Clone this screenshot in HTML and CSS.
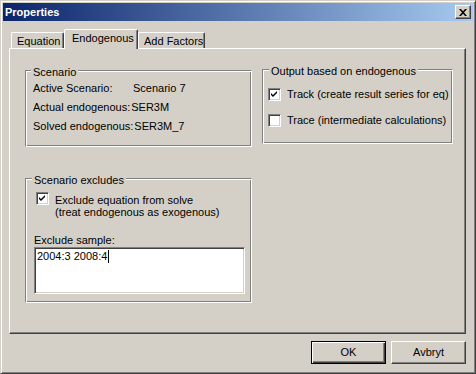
FILE: index.html
```html
<!DOCTYPE html>
<html lang="en">
<head>
  <meta charset="UTF-8" />
  <title>Properties</title>
  <link rel="stylesheet" href="styles.css">
</head>
<body>

  <div class="window">
    <div class="titlebar">
      <span class="title">Properties</span>
      <div class="close-btn">
        <svg width="8" height="7" viewBox="0 0 8 7">
          <path d="M0 0h2l2 2.2L6 0h2L5 3.5 8 7H6L4 4.8 2 7H0l3-3.5z" fill="#000"/>
        </svg>
      </div>
    </div>

    <div class="tabs">
      <div class="tab tab-eq">Equation</div>
      <div class="tab tab-endo active">Endogenous</div>
      <div class="tab tab-af">Add Factors</div>
    </div>

    <div class="panel">
      <div class="col-left">
        <div class="group scenario">
          <div class="group-title">Scenario</div>
          <div class="kv-row"><span class="kv-key">Active Scenario:</span><span class="kv-val first">Scenario 7</span></div>
          <div class="kv-row"><span class="kv-key">Actual endogenous:</span><span class="kv-val">SER3M</span></div>
          <div class="kv-row"><span class="kv-key">Solved endogenous:</span><span class="kv-val">SER3M_7</span></div>
        </div>

        <div class="group excludes">
          <div class="group-title">Scenario excludes</div>
          <div class="check-row multi">
            <div class="checkbox checked">
              <svg width="13" height="13" viewBox="0 0 13 13"><polygon points="3,5 5,7 9,3 9,5 5,9 3,7" fill="#000"/></svg>
            </div>
            <div class="check-label">
              <div>Exclude equation from solve</div>
              <div>(treat endogenous as exogenous)</div>
            </div>
          </div>
          <div class="field-label">Exclude sample:</div>
          <div class="textbox">2004:3 2008:4<span class="caret"></span></div>
        </div>
      </div>

      <div class="col-right">
        <div class="group output">
          <div class="group-title">Output based on endogenous</div>
          <div class="check-row">
            <div class="checkbox checked">
              <svg width="13" height="13" viewBox="0 0 13 13"><polygon points="3,5 5,7 9,3 9,5 5,9 3,7" fill="#000"/></svg>
            </div>
            <span class="check-label">Track (create result series for eq)</span>
          </div>
          <div class="check-row second">
            <div class="checkbox"></div>
            <span class="check-label">Trace (intermediate calculations)</span>
          </div>
        </div>
      </div>
    </div>

    <div class="footer">
      <div class="btn default">OK</div>
      <div class="btn">Avbryt</div>
    </div>
  </div>

</body>
</html>
```

FILE: styles.css
```css
* {
  box-sizing: border-box;
}

body {
  margin: 0;
  padding: 0;
  background: #d4d0c8;
  font-family: "Liberation Sans", Arial, sans-serif;
  font-size: 11px;
  line-height: 13px;
  color: #000;
}

.window {
  width: 476px;
  height: 374px;
  background: #d4d0c8;
  border: 1px solid;
  border-color: #d4d0c8 #404040 #404040 #d4d0c8;
  box-shadow: inset 1px 1px #fff, inset -1px -1px #808080;
  padding: 2px;
  display: flex;
  flex-direction: column;
}

/* title bar */
.titlebar {
  height: 18px;
  display: flex;
  align-items: center;
  justify-content: space-between;
  padding: 0 2px 0 2px;
  background: linear-gradient(to right, #0a246a, #a6caf0);
}

.title {
  color: #fff;
  font-weight: bold;
}

.close-btn {
  width: 16px;
  height: 14px;
  background: #d4d0c8;
  border: 1px solid;
  border-color: #fff #404040 #404040 #fff;
  box-shadow: inset -1px -1px #808080;
  display: flex;
  align-items: center;
  justify-content: center;
  padding-right: 1px;
}

/* tabs */
.tabs {
  display: flex;
  align-items: flex-end;
  margin-top: 8px;
  padding-left: 8px;
}

.tab {
  height: 16px;
  border: 1px solid;
  border-bottom: none;
  border-color: #fff #404040 #404040 #fff;
  border-radius: 2px 2px 0 0;
  box-shadow: inset -1px 0 #808080;
  padding: 2px 0 0 5px;
}

.tab-eq { width: 53px; }
.tab-endo { width: 74px; }
.tab-af { width: 67px; }

.tab.active {
  position: relative;
  z-index: 1;
  height: 20px;
  margin-bottom: -1px;
  background: #d4d0c8;
  padding: 2px 0 0 7px;
}

/* panel */
.panel {
  margin-left: 6px;
  width: 457px;
  height: 286px;
  border: 1px solid;
  border-color: #fff #404040 #404040 #fff;
  box-shadow: inset -1px -1px #808080;
  padding: 21px 0 0 15px;
  display: flex;
  gap: 10px;
  align-items: flex-start;
}

.col-left {
  width: 227px;
  display: flex;
  flex-direction: column;
  gap: 31px;
}

.col-right {
  width: 191px;
  margin-top: -1px;
}

.group {
  border: 1px solid;
  border-color: #808080 #fff #fff #808080;
  box-shadow: inset 1px 1px #fff, inset -1px -1px #808080;
}

.group-title {
  display: table;
  margin: -5px 0 0 5px;
  padding: 0 2px;
  background: #d4d0c8;
}

.scenario {
  height: 77px;
  padding-left: 7px;
}

.scenario .group-title {
  margin-left: -2px;
  margin-bottom: 3px;
}

.kv-row {
  display: flex;
  white-space: nowrap;
  margin-bottom: 6px;
}

.kv-key {
  flex: none;
  min-width: 97px;
  margin-right: 1px;
}

.kv-val.first {
  padding-left: 2px;
}

.output {
  height: 75px;
  padding-left: 5px;
}

.output .group-title {
  margin-left: 1px;
  margin-bottom: 10px;
}

.check-row {
  display: flex;
  align-items: center;
  gap: 6px;
  white-space: nowrap;
}

.check-row.second {
  margin-top: 13px;
}

.checkbox {
  width: 13px;
  height: 13px;
  flex: none;
  background: #fff;
  border: 1px solid;
  border-color: #808080 #fff #fff #808080;
  box-shadow: inset 1px 1px #404040, inset -1px -1px #d4d0c8;
}

.checkbox svg {
  display: block;
  margin: -1px 0 0 -1px;
}

.excludes {
  height: 125px;
  padding-left: 8px;
}

.excludes .group-title {
  margin-left: -2px;
  margin-bottom: 5px;
}

.check-row.multi {
  align-items: flex-start;
  margin-left: 2px;
}

.check-row.multi .check-label {
  line-height: 12px;
  padding-top: 2px;
}

.field-label {
  margin-top: 16px;
}

.textbox {
  width: 211px;
  height: 47px;
  background: #fff;
  border: 1px solid;
  border-color: #808080 #fff #fff #808080;
  box-shadow: inset 1px 1px #404040, inset -1px -1px #d4d0c8;
  padding: 2px 2px;
}

.caret {
  display: inline-block;
  width: 1px;
  height: 13px;
  background: #000;
  vertical-align: top;
  margin-left: 1px;
}

/* buttons */
.footer {
  display: flex;
  justify-content: flex-end;
  gap: 5px;
  margin-top: 7px;
  padding-right: 7px;
}

.btn {
  width: 75px;
  height: 23px;
  display: flex;
  align-items: center;
  justify-content: center;
  border: 1px solid;
  border-color: #fff #404040 #404040 #fff;
  box-shadow: inset -1px -1px #808080;
}

.btn.default {
  border-color: #000;
  box-shadow: inset 1px 1px #fff, inset -1px -1px #404040, inset -2px -2px #808080;
}
```
